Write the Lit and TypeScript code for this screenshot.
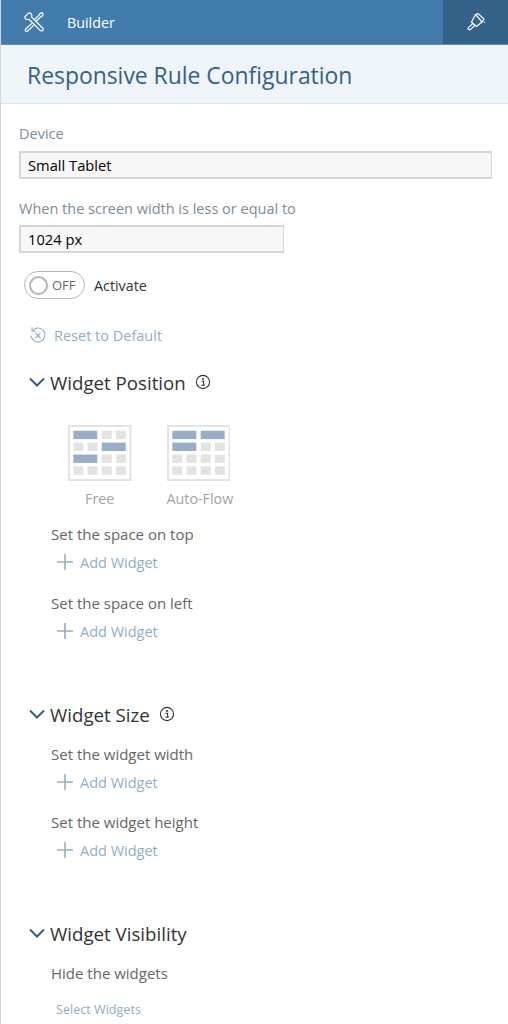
import { LitElement, html, css, svg } from "lit";
import { customElement } from "lit/decorators.js";

const chevron = html`<svg class="chev" viewBox="0 0 16 10" width="16" height="10"><path d="M1 1.5 8 8.5 15 1.5" fill="none" stroke="#2f5f8a" stroke-width="2"/></svg>`;
const info = html`<svg class="info" viewBox="0 0 16 16" width="16" height="16"><circle cx="8" cy="8" r="6.6" fill="none" stroke="#333" stroke-width="1.1"/><circle cx="8" cy="4.9" r="1" fill="#333"/><path d="M6.5 7.2H8.6V11H9.8M6.3 11.2H9.8" fill="none" stroke="#333" stroke-width="1.1"/></svg>`;
const plus = html`<svg viewBox="0 0 16 16" width="16" height="16"><path d="M8 0V16M0 8H16" stroke="#91aec8" stroke-width="1.6"/></svg>`;

function grid(rows: string[]) {
  const cells = [] as unknown[];
  rows.forEach((r, y) => {
    let x = 0;
    for (const c of r) {
      const top = y * 11.9;
      if (c === "W") {
        cells.push(svg`<rect x=${x} y=${top} width="24" height="8.4" fill="#97afc6"/>`);
        x += 28.4;
      } else {
        cells.push(svg`<rect x=${x} y=${top} width="10" height="8.4" fill="#e3e3e3"/>`);
        x += 14.2;
      }
    }
  });
  return html`<svg viewBox="-5.3 -5.7 63.5 56" width="63.5" height="56"><rect x="-4.3" y="-4.7" width="61.5" height="54" fill="#fff" stroke="#e3e3e3" stroke-width="2"/>${cells}</svg>`;
}

@customElement("app-root")
export class AppRoot extends LitElement {
  static styles = css`
    :host { display: block; width: 508px; height: 1024px; overflow: hidden; background: #fff; box-sizing: border-box; border-left: 1px solid #d4d4d4; font-family: "Open Sans", "Noto Sans", sans-serif; color: #333; }
    .top { height: 44px; background: #427cac; display: flex; align-items: center; color: #fff; border-bottom: 1px solid #5f8db5; box-sizing: content-box; }
    .top .tool { margin-left: 23px; width: 20px; height: 20px; }
    .top .name { margin-left: 23px; font-size: 14.3px; font-weight: 500; flex: 1; }
    .top .brush { width: 65px; height: 44px; background: #346187; display: flex; align-items: center; justify-content: center; }
    .titlebar { height: 59px; box-sizing: border-box; padding: 2px 0 0 26px; background: #eff4f9; border-bottom: 1px solid #d8e4ee; display: flex; align-items: center; }
    .titlebar h1 { margin: 0; font-size: 22.9px; font-weight: 400; color: #346187; }
    .body { padding: 0 16px 0 18px; }
    .label { font-size: 14.5px; color: #7d8c99; line-height: 20px; }
    .field { height: 28px; box-sizing: border-box; background: #f7f7f7; border: 1px solid #d6d6d6; border-width: 2px 1px 2px 2px; font-size: 14.7px; color: #000; display: flex; align-items: center; padding: 0 0 1px 7px; }
    .device { margin-top: 7px; width: 473px; }
    .screen { margin-top: 20px; }
    .width { margin-top: 6px; width: 265px; }
    .switchrow { display: flex; align-items: center; margin: 18px 0 0 5px; height: 28px; gap: 9px; font-size: 14.3px; color: #333; }
    .switch { width: 61px; height: 28px; box-sizing: border-box; border: 1px solid #b5b5b5; border-radius: 14px; display: flex; align-items: center; padding-left: 4px; gap: 4px; font-size: 13px; color: #666; }
    .knob { width: 15px; height: 15px; border: 2px solid #b5b5b5; border-radius: 50%; background: #fff; }
    .reset { display: flex; align-items: center; margin: 24px 0 0 10px; gap: 7px; height: 24px; font-size: 14.5px; color: #91aec8; }
    .sec { display: flex; align-items: center; height: 28px; margin-left: 10px; font-size: 18.7px; font-weight: 500; color: #333; }
    .chev { margin-right: 5px; }
    .info { margin-left: 9px; }
    .p1 { margin-top: 21px; }
    .tiles { display: flex; gap: 35px; margin: 29px 0 0 49px; }
    .tile { width: 63.5px; text-align: center; font-size: 14.3px; color: #a3a3a3; }
    .tile svg { display: block; }
    .tile div { margin-top: 8px; white-space: nowrap; line-height: 20px; }
    .sub { margin-left: 32px; font-size: 15px; color: #666; line-height: 20px; }
    .add { display: flex; align-items: center; margin-left: 38px; gap: 7px; font-size: 14.5px; color: #91aec8; height: 24px; margin-top: 6px; }
    .m1 { margin-top: 15px; }
    .m2 { margin-top: 19px; }
    .sz { margin-top: 57px; }
    .vis { margin-top: 57px; }
    .t16 { margin-top: 16px; }
    .t18 { margin-top: 18px; }
    .sel { margin: 18px 0 0 37px; font-size: 12.6px; color: #91aec8; line-height: 18px; }
    .first { margin-top: 20px; }
  `;

  render() {
    return html`
      <div class="top">
        <svg class="tool" viewBox="0 0 20 20" fill="none" stroke="#fff" stroke-width="1.2">
          <path d="M1 4.500 4.200 1.400C5.500.7 7 1.200 7.600 2.400c.4.900.3 1.800-.1 2.600L18.600 16c.8.800.8 1.800.1 2.500-.7.7-1.800.7-2.600-.1L5 7.300c-.9.500-1.900.5-2.800 0C1.100 6.700.7 5.600 1 4.500Z"/>
          <path d="M10.500 7.500 15.500 2.800 15.800 1.600 17.800.6 19.200 2 18.300 4 17 4.500 12.200 9.200M7.800 11.400 1.800 17c-.7.700-.7 1.600-.1 2.100s1.500.5 2.200-.2L9.700 13.300"/>
        </svg>
        <span class="name">Builder</span>
        <div class="brush">
          <svg viewBox="0 0 18 18" width="18" height="18" fill="none" stroke="#fff" stroke-width="1.2">
            <path d="M8.500 1.500 11 .6 17 6 15 9ZM8.500 1.500 4.500 9 9.500 13.500 15 9M5.800 10.500 1.400 14.600c-1.100 1.200.7 3 2 2L8 12.300"/>
            <circle cx="17.300" cy="9.300" r=".7" fill="#fff" stroke="none"/>
          </svg>
        </div>
      </div>
      <div class="titlebar"><h1>Responsive Rule Configuration</h1></div>
      <div class="body">
        <div class="label first">Device</div>
        <div class="field device">Small Tablet</div>
        <div class="label screen">When the screen width is less or equal to</div>
        <div class="field width">1024 px</div>
        <div class="switchrow">
          <div class="switch"><span class="knob"></span><span>OFF</span></div>
          <span>Activate</span>
        </div>
        <div class="reset">
          <svg viewBox="0 0 18 18" width="18" height="18" fill="none" stroke="#91aec8" stroke-width="1.1">
            <path d="M3.200 5A7 7 0 1 1 2 9.500M3 1.200V5.200H7"/>
            <path d="M6.500 7 11.500 12M11.500 7 6.500 12"/>
          </svg>
          <span>Reset to Default</span>
        </div>
        <div class="sec p1">${chevron}<span>Widget Position</span>${info}</div>
        <div class="tiles">
          <div class="tile">${grid(["Wnn", "nnW", "Wnn", "nnnn"])}<div>Free</div></div>
          <div class="tile">${grid(["WW", "Wnn", "nnnn", "nnnn"])}<div>Auto-Flow</div></div>
        </div>
        <div class="sub m1">Set the space on top</div>
        <div class="add">${plus}<span>Add Widget</span></div>
        <div class="sub m2">Set the space on left</div>
        <div class="add">${plus}<span>Add Widget</span></div>
        <div class="sec sz">${chevron}<span>Widget Size</span>${info}</div>
        <div class="sub t16">Set the widget width</div>
        <div class="add">${plus}<span>Add Widget</span></div>
        <div class="sub t18">Set the widget height</div>
        <div class="add">${plus}<span>Add Widget</span></div>
        <div class="sec vis">${chevron}<span>Widget Visibility</span></div>
        <div class="sub t16">Hide the widgets</div>
        <div class="sel">Select Widgets</div>
      </div>
    `;
  }
}
